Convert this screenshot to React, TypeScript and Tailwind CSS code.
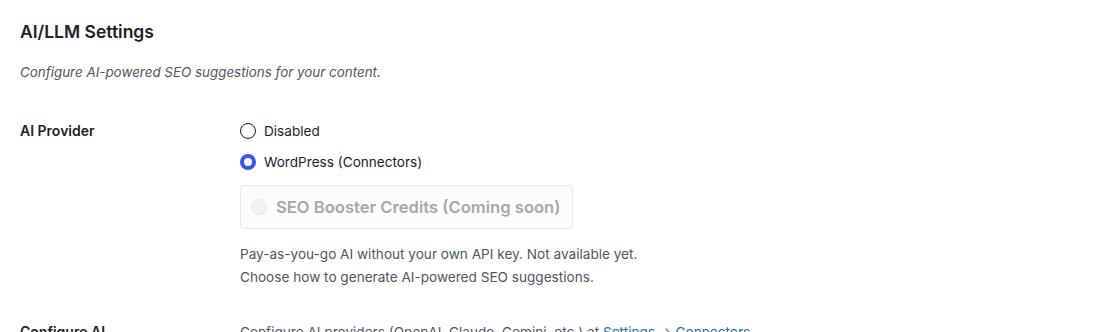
import React from "react";

function Radio({ checked, disabled }: { checked?: boolean; disabled?: boolean }) {
  if (disabled) {
    return <span className="w-4 h-4 rounded-full border border-[#e6e6e6] bg-[#f3f3f3] shrink-0" />;
  }
  if (checked) {
    return <span className="w-4 h-4 rounded-full border-[4px] border-[#3858e9] bg-white shrink-0" />;
  }
  return <span className="w-4 h-4 rounded-full border border-[#1e1e1e] bg-white shrink-0" />;
}

export default function App() {
  return (
    <div className="w-[1100px] h-[332px] overflow-hidden bg-white text-[#1d2327] font-['Inter',sans-serif]">
      <div className="px-5 pt-[21px]">
        <h2 className="text-[17.5px] font-semibold leading-[22px]">AI/LLM Settings</h2>
        <p className="mt-[20px] text-[13.4px] italic text-[#50575e] leading-[18px]">
          Configure AI-powered SEO suggestions for your content.
        </p>

        <div className="flex mt-[40px]">
          <div className="w-[220px] text-[14px] font-semibold leading-5">AI Provider</div>
          <div className="flex flex-col">
            <label className="flex items-center gap-2 text-[13.6px] leading-5 h-5">
              <Radio />
              <span>Disabled</span>
            </label>
            <label className="flex items-center gap-2 text-[13.6px] leading-5 h-5 mt-[11px]">
              <Radio checked />
              <span>WordPress (Connectors)</span>
            </label>
            <div className="mt-[13px] w-[333px] h-[44px] flex items-center gap-[9px] pl-[10px] border border-[#e8e8e8] rounded-[4px] bg-[#fcfcfc]">
              <Radio disabled />
              <span className="text-[16.6px] font-semibold text-[#a7a7a7]">SEO Booster Credits (Coming soon)</span>
            </div>
            <p className="mt-[14px] text-[13.6px] leading-[23px] text-[#50575e]">
              Pay-as-you-go AI without your own API key. Not available yet.
            </p>
            <p className="text-[13.6px] leading-[23px] text-[#50575e]">
              Choose how to generate AI-powered SEO suggestions.
            </p>
          </div>
        </div>

        <div className="flex mt-[33px]">
          <div className="w-[220px] text-[14px] font-semibold leading-5">Configure AI</div>
          <div className="text-[13.6px] leading-5 text-[#50575e]">
            Configure AI providers (OpenAI, Claude, Gemini, etc.) at{" "}
            <a className="text-[#2271b1]">Settings → Connectors</a>
          </div>
        </div>
      </div>
    </div>
  );
}
